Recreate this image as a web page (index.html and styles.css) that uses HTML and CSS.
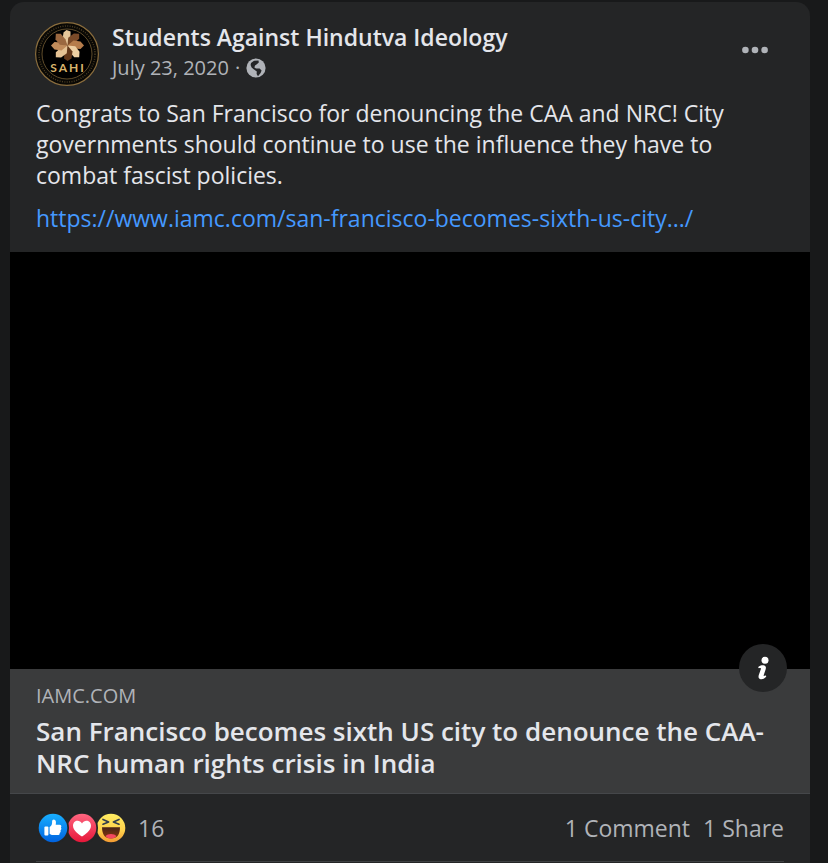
FILE: index.html
```html
<!DOCTYPE html>
<html lang="en">
<head>
<meta charset="utf-8">
<meta name="viewport" content="width=device-width, initial-scale=1">
<title>Students Against Hindutva Ideology</title>
<link rel="stylesheet" href="styles.css">
</head>
<body>
<article class="post">
  <header class="post-header">
    <a class="avatar" href="#" aria-label="Students Against Hindutva Ideology">
      <svg viewBox="0 0 64 64" width="64" height="64" aria-hidden="true">
        <circle cx="32" cy="32" r="31.4" fill="#090805" stroke="#8a6d3d" stroke-width="1.2"/>
        <circle cx="32" cy="32" r="28" fill="none" stroke="#4a3c22" stroke-width="1.5" stroke-dasharray="1 1.4"/>
        <circle cx="32" cy="32" r="25" fill="#000" stroke="#5e4b2a" stroke-width="1"/>
        <g transform="translate(32.5 23.5)">
          <path d="M0 0L-5-6L-4-13L-1-15.5L3-14L3-6Z" fill="#e6c69a"/>
          <path d="M0 0L-5-6L-4-13L0-16.5L3.5-13L3-6Z" fill="#7a4a28" transform="rotate(45)"/>
          <path d="M0 0L-5-6L-4-13L0-16.5L3.5-13L3-6Z" fill="#b57c4b" transform="rotate(90)"/>
          <path d="M0 0L-5-6L-4-13L0-16.5L3.5-13L3-6Z" fill="#edcfa2" transform="rotate(135)"/>
          <path d="M0 0L-5-6L-4-13L0-15.5L3.5-13L3-6Z" fill="#633719" transform="rotate(180)"/>
          <path d="M0 0L-5-6L-4-13L0-16.5L3.5-13L3-6Z" fill="#e5c294" transform="rotate(225)"/>
          <path d="M0 0L-5-6L-4-13L0-16.5L3.5-13L3-6Z" fill="#c08b5b" transform="rotate(270)"/>
          <path d="M0 0L-5-6L-4-13L0-16.5L3.5-13L3-6Z" fill="#9b6840" transform="rotate(315)"/>
        </g>
        <text class="avatar-text" x="33" y="50" text-anchor="middle">SAHI</text>
      </svg>
    </a>
    <div class="byline">
      <h2 class="author"><a href="#">Students Against Hindutva Ideology</a></h2>
      <div class="meta">
        <time datetime="2020-07-23">July 23, 2020</time>
        <span>·</span>
        <svg class="globe" viewBox="0 0 20 20" width="20" height="20" role="img" aria-label="Public">
          <circle cx="10" cy="10" r="9.6" fill="#b0b3b8"/>
          <path d="M5 5L8 2.8L12.5 2.6L12.8 4.6L10.5 6.4L9 7.6L8.4 9.6L10 10.4L13.6 10.6L15.6 12.6L14.6 15L12 18.2L10.6 16L10.8 13.4L8 11.4L5.6 9.6L4.6 7Z" fill="#242526"/>
        </svg>
      </div>
    </div>
    <button class="more" type="button" aria-label="Actions for this post">
      <svg viewBox="0 0 28 8" width="28" height="8" aria-hidden="true" fill="#b0b3b8">
        <circle cx="3.4" cy="4" r="3.3"/><circle cx="13" cy="4" r="3.3"/><circle cx="22.6" cy="4" r="3.3"/>
      </svg>
    </button>
  </header>

  <div class="message">
    <p>Congrats to San Francisco for denouncing the CAA and NRC! City governments should continue to use the influence they have to combat fascist policies.</p>
    <p><a href="#">https://www.iamc.com/san-francisco-becomes-sixth-us-city.../</a></p>
  </div>

  <section class="preview">
    <div class="preview-image"></div>
    <div class="preview-text">
      <button class="info" type="button" aria-label="Show more information about this link">
        <svg viewBox="0 0 48 48" width="48" height="48" aria-hidden="true">
          <circle cx="26" cy="16.3" r="3.5" fill="#fff"/>
          <path d="M19.8 22.5C21.5 21.2 23.8 20.8 25.4 21.4C27 22 27.2 23.6 26.6 25.4L24.6 31.4C24.5 32.2 25.3 32.1 26.2 31.5C27.2 31.2 27.5 32.2 26.9 33C25.2 35 22.6 35.7 20.9 34.9C19.4 34.2 19.3 32.7 19.8 31L21.9 25C22.2 24 21.5 23.8 20.5 24.1C19.3 24.4 18.8 23.4 19.8 22.5Z" fill="#fff"/>
        </svg>
      </button>
      <span class="domain">IAMC.COM</span>
      <h3 class="headline"><a href="#">San Francisco becomes sixth US city to denounce the CAA-NRC human rights crisis in India</a></h3>
    </div>
  </section>

  <footer class="stats">
    <button class="reactions" type="button" aria-label="16 reactions">
      <svg viewBox="0 0 88 32" width="88" height="32" aria-hidden="true">
        <defs>
          <linearGradient id="blue" x2="0" y2="1"><stop stop-color="#18afff"/><stop offset="1" stop-color="#0062df"/></linearGradient>
          <linearGradient id="red" x2="0" y2="1"><stop stop-color="#ff6680"/><stop offset="1" stop-color="#e61739"/></linearGradient>
          <linearGradient id="yellow" x2="0" y2="1"><stop stop-color="#ffed62"/><stop offset=".6" stop-color="#ffd04b"/><stop offset="1" stop-color="#f39a32"/></linearGradient>
          <linearGradient id="mouth" x2="0" y2="1"><stop stop-color="#472315"/><stop offset="1" stop-color="#8b3a0e"/></linearGradient>
        </defs>
        <circle cx="73" cy="16" r="14.3" fill="url(#yellow)"/>
        <circle cx="44" cy="16" r="16" fill="#242526"/>
        <circle cx="44" cy="16" r="14.3" fill="url(#red)"/>
        <circle cx="15" cy="16" r="16" fill="#242526"/>
        <circle cx="15" cy="16" r="14.3" fill="url(#blue)"/>
        <rect x="6.4" y="14.6" width="4" height="9" rx="1" fill="#fff"/>
        <path d="M11.6 15C13.8 13.8 14.2 12 14.1 9.4C14.1 8.2 14.8 7.4 15.8 7.4C17.8 7.5 18.4 9.4 17.7 12.8H21.4C23.3 12.8 23.9 14.4 22.9 15.5C23.7 16.5 23.4 17.7 22.5 18.3C23 19.4 22.6 20.4 21.7 20.9C21.8 22.5 21 23 19.5 23H15.2C13.6 23 12.5 22.4 11.6 21.7Z" fill="#fff"/>
        <path d="M44 24.5C41 22.7 35 18.5 35 13.8C35 8 41.6 7 44 11.5C46.4 7 53 8 53 13.8C53 18.5 47 22.7 44 24.5Z" fill="#fff"/>
        <path d="M64 15.2H82C82 22.5 79 26.5 73 26.5S64 22.5 64 15.2Z" fill="url(#mouth)"/>
        <path d="M67.6 24.2C69.5 21.2 76.5 21.2 78.4 24.2C77 25.8 75.2 26.5 73 26.5S69 25.8 67.6 24.2Z" fill="#f6495f"/>
        <path d="M65 7.4L70.6 10L65 12.2M81 7.4L75.4 10L81 12.2" fill="none" stroke="#34404d" stroke-width="1.7" stroke-linecap="round" stroke-linejoin="round"/>
      </svg>
      <span>16</span>
    </button>
    <div class="counts">
      <button type="button">1 Comment</button>
      <button type="button">1 Share</button>
    </div>
  </footer>
  <hr class="divider">
</article>
</body>
</html>
```
FILE: styles.css
```css
* { box-sizing: border-box; }

body {
  margin: 0;
  background: #18191a;
  color: #e4e6eb;
  font-family: "Segoe UI", "Open Sans", "Noto Sans", sans-serif;
  font-size: 23px;
  line-height: 31px;
}

a { color: inherit; text-decoration: none; }

button {
  padding: 0;
  border: 0;
  background: none;
  color: inherit;
  font: inherit;
  cursor: pointer;
}

svg { display: block; }

h2, h3, p { margin: 0; }

.post {
  margin: 2px 18px 0 10px;
  min-height: calc(100vh - 2px);
  border-radius: 14px 14px 0 0;
  background: #242526;
}

.post-header {
  display: flex;
  align-items: flex-start;
  gap: 13px;
  padding: 20px 40px 0 25px;
}

.avatar-text {
  fill: #d8b46c;
  font-family: Lato, sans-serif;
  font-size: 12px;
  font-weight: 700;
  letter-spacing: 2px;
}

.byline { flex: 1; min-width: 0; }

.author {
  font-size: 23px;
  font-weight: 600;
  line-height: 30px;
}

.meta {
  display: flex;
  align-items: center;
  gap: 6px;
  color: #b0b3b8;
  font-size: 20px;
  line-height: 32px;
}

.more { padding: 24px 0; }

.message {
  display: grid;
  gap: 12px;
  padding: 12px 26px 18px;
}

.message a { color: #4599ff; }

.preview-image {
  aspect-ratio: 800 / 417;
  background: #000;
}

.preview-text {
  position: relative;
  padding: 12px 26px 14px;
  border-bottom: 1px solid #45474a;
  background: #3a3b3c;
}

.info {
  position: absolute;
  top: -25px;
  right: 23px;
  border-radius: 50%;
  background: #242526;
}

.domain {
  display: block;
  color: #b0b3b8;
  font-size: 20px;
  line-height: 30px;
}

.headline {
  padding-top: 4px;
  font-size: 26px;
  font-weight: 600;
  line-height: 32px;
}

.stats {
  display: flex;
  align-items: center;
  justify-content: space-between;
  padding: 18px 26px 17px 28px;
  color: #b0b3b8;
}

.reactions {
  display: flex;
  align-items: center;
  gap: 12px;
}

.counts { display: flex; gap: 13px; }

.divider {
  height: 1px;
  margin: 0 26px;
  border: 0;
  background: #3e4042;
}
```
